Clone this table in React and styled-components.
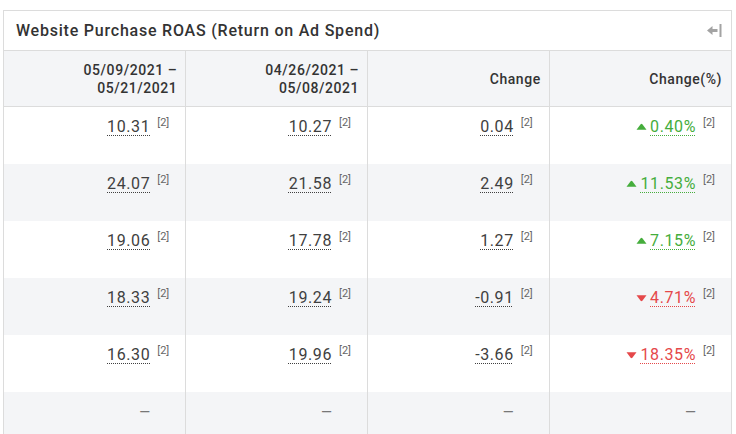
import React from "react";
import styled, { createGlobalStyle } from "styled-components";

const GlobalStyle = createGlobalStyle`
  body {
    margin: 0;
    background: #ffffff;
    font-family: Roboto, "Liberation Sans", Arial, sans-serif;
    color: #333333;
  }
`;

const Panel = styled.div`
  margin: 10px 0 0 3px;
  width: 729px;
  border: 1px solid #dcdcdc;
  border-bottom: none;
  box-sizing: border-box;
`;

const TitleBar = styled.div`
  height: 40px;
  display: flex;
  align-items: center;
  justify-content: space-between;
  padding: 0 9px 0 12px;
  border-bottom: 1px solid #dcdcdc;
  box-sizing: border-box;
`;

const Title = styled.h2`
  margin: 0;
  font-size: 16px;
  font-weight: 500;
  letter-spacing: 0.78px;
  color: #333333;
`;

const CollapseButton = styled.button`
  border: none;
  background: none;
  padding: 0;
  width: 16px;
  height: 16px;
  display: flex;
  align-items: center;
  justify-content: center;
  cursor: pointer;
`;

const Table = styled.table`
  width: 100%;
  border-collapse: collapse;
  table-layout: fixed;
`;

const HeadCell = styled.th`
  height: 55px;
  background: #f4f5f7;
  border-right: 1px solid #dcdcdc;
  border-bottom: 1px solid #dcdcdc;
  padding: 0 8px 0 8px;
  text-align: right;
  vertical-align: middle;
  font-size: 14px;
  font-weight: 500;
  letter-spacing: 0.55px;
  line-height: 18px;
  color: #333333;
  &:last-child {
    border-right: none;
    padding-right: 9px;
  }
`;

const Row = styled.tr`
  background: ${({ $shaded }) => ($shaded ? "#f4f5f7" : "#ffffff")};
`;

const Cell = styled.td`
  height: 57px;
  box-sizing: border-box;
  padding: 9px 16px 0 8px;
  text-align: right;
  vertical-align: top;
  border-right: 1px solid #dcdcdc;
  &:last-child {
    border-right: none;
  }
`;

const ValueWrap = styled.span`
  display: inline-flex;
  align-items: flex-start;
  justify-content: flex-end;
`;

const toneColor = (tone) =>
  tone === "up" ? "#45ad3c" : tone === "down" ? "#e5484a" : "#404040";

const Value = styled.span`
  font-size: 16px;
  line-height: 22px;
  letter-spacing: 0.6px;
  color: ${({ $tone }) => toneColor($tone)};
  text-decoration: underline dotted;
  text-decoration-color: ${({ $tone }) => toneColor($tone)};
  text-underline-offset: 3px;
  text-decoration-thickness: 1px;
`;

const Trend = styled.svg`
  width: 11px;
  height: 8px;
  margin: 7px 3px 0 0;
`;

const Note = styled.sup`
  width: 19px;
  text-align: right;
  font-size: 11px;
  line-height: 14px;
  color: #666666;
  vertical-align: top;
`;

const Dash = styled.span`
  display: inline-block;
  margin-right: 19px;
  font-size: 14px;
  line-height: 22px;
  color: #777777;
`;

const rows = [
  ["10.31", "10.27", "0.04", "0.40%", "up"],
  ["24.07", "21.58", "2.49", "11.53%", "up"],
  ["19.06", "17.78", "1.27", "7.15%", "up"],
  ["18.33", "19.24", "-0.91", "4.71%", "down"],
  ["16.30", "19.96", "-3.66", "18.35%", "down"],
];

const Metric = ({ value, tone }) => (
  <ValueWrap>
    {tone && (
      <Trend viewBox="0 0 11 8">
        {tone === "up" ? (
          <path d="M4.6 1.2 Q5.5 0.3 6.4 1.2 L10.5 6.8 L0.5 6.8 Z" fill="#45ad3c" />
        ) : (
          <path d="M0.5 1.2 L10.5 1.2 L6.4 6.8 Q5.5 7.7 4.6 6.8 Z" fill="#e5484a" />
        )}
      </Trend>
    )}
    <Value $tone={tone}>{value}</Value>
    <Note>[2]</Note>
  </ValueWrap>
);

export default function App() {
  return (
    <>
      <GlobalStyle />
      <Panel>
        <TitleBar>
          <Title>Website Purchase ROAS (Return on Ad Spend)</Title>
          <CollapseButton aria-label="collapse">
            <svg width="15" height="13" viewBox="0 0 15 13">
              <path d="M0 6.5 L5.5 2 L5.5 5 L10.5 5 L10.5 8 L5.5 8 L5.5 11 Z" fill="#a3a3a3" />
              <rect x="12.5" y="0" width="2" height="13" fill="#a3a3a3" />
            </svg>
          </CollapseButton>
        </TitleBar>
        <Table>
          <thead>
            <tr>
              <HeadCell>
                05/09/2021 –<br />
                05/21/2021
              </HeadCell>
              <HeadCell>
                04/26/2021 –<br />
                05/08/2021
              </HeadCell>
              <HeadCell>Change</HeadCell>
              <HeadCell>Change(%)</HeadCell>
            </tr>
          </thead>
          <tbody>
            {rows.map(([a, b, c, d, tone], i) => (
              <Row key={i} $shaded={i % 2 === 1}>
                <Cell>
                  <Metric value={a} />
                </Cell>
                <Cell>
                  <Metric value={b} />
                </Cell>
                <Cell>
                  <Metric value={c} />
                </Cell>
                <Cell>
                  <Metric value={d} tone={tone} />
                </Cell>
              </Row>
            ))}
            <Row $shaded>
              <Cell>
                <Dash>—</Dash>
              </Cell>
              <Cell>
                <Dash>—</Dash>
              </Cell>
              <Cell>
                <Dash>—</Dash>
              </Cell>
              <Cell>
                <Dash>—</Dash>
              </Cell>
            </Row>
          </tbody>
        </Table>
      </Panel>
    </>
  );
}
